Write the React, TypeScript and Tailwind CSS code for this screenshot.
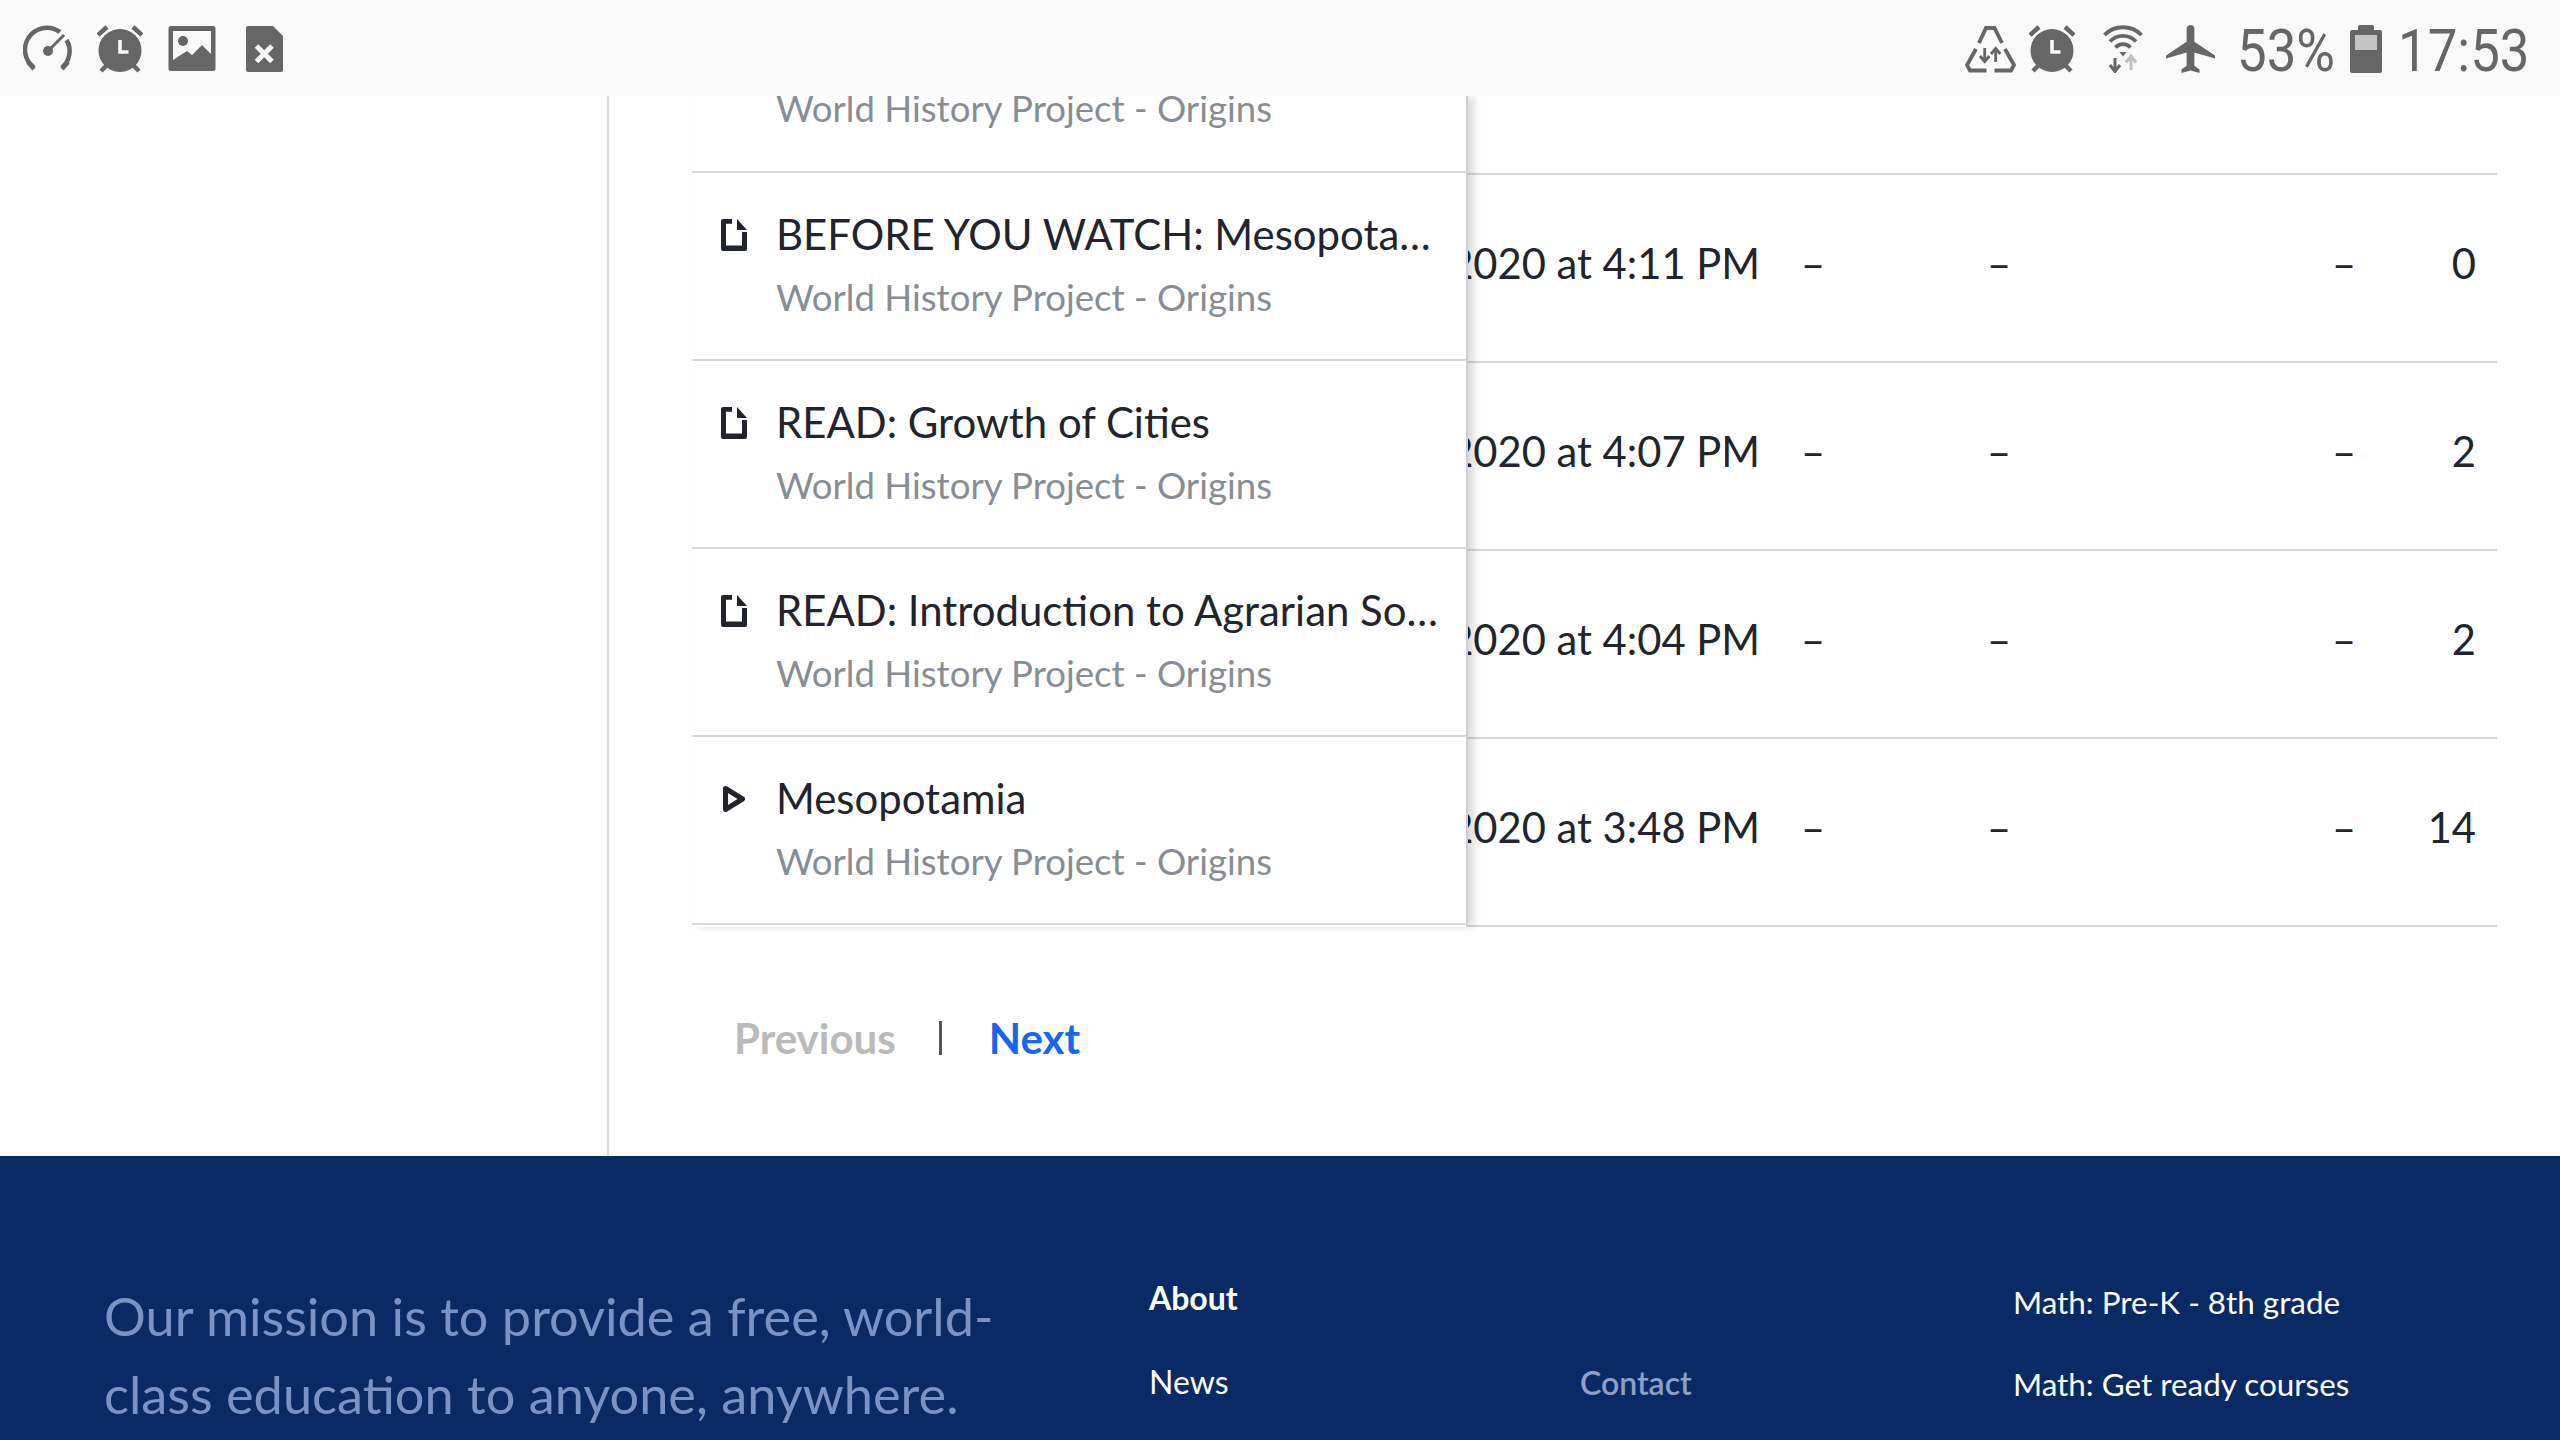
// App.tsx
const rows = [
  { title: "BEFORE YOU WATCH: Mesopotamia", kind: "article", time: "2020 at 4:11 PM", count: "0" },
  { title: "READ: Growth of Cities", kind: "article", time: "2020 at 4:07 PM", count: "2" },
  { title: "READ: Introduction to Agrarian Societies", kind: "article", time: "2020 at 4:04 PM", count: "2" },
  { title: "Mesopotamia", kind: "video", time: "2020 at 3:48 PM", count: "14" },
];

function AlarmIcon({ cx, width }: { cx: number; width: number }) {
  return (
    <svg width={width} height={48} viewBox={`${cx - width / 2} 25 ${width} 48`}>
      <circle cx={cx} cy={50.5} r={21.5} fill="#666" />
      <path d={`M${cx - 22} 35l9-8M${cx + 22} 35l-9-8M${cx - 19} 71l5-5M${cx + 19} 71l-5-5`} stroke="#666" strokeWidth={4.5} fill="none" />
      <path d={`M${cx} 40v12h8.5`} stroke="#f9f9f9" strokeWidth={3.6} fill="none" />
    </svg>
  );
}

function GaugeIcon() {
  return (
    <svg width={50} height={48} viewBox="23 25 50 48" fill="none" stroke="#666" strokeWidth={4.5}>
      <path d="M34 67.500A21.500 21.500 0 0 1 60 32" />
      <path d="M66.500 40A21.500 21.500 0 0 1 62 67.500" />
      <path d="M28 62l6 7M68 62l-6 7" />
      <path d="M48 51L64 35" strokeWidth={3} />
      <circle cx={48} cy={51} r={5} fill="#666" stroke="none" />
    </svg>
  );
}

function ImageIcon() {
  return (
    <svg width={48} height={48} viewBox="168 25 48 48">
      <rect x={168.500} y={26} width={47} height={45} rx={2.500} fill="#666" />
      <rect x={173} y={31} width={38} height={30} fill="#f9f9f9" />
      <circle cx={183} cy={41} r={5} fill="#666" />
      <path d="M173 60l14-9 5 4 10-10 9 9v17h-38z" fill="#666" />
    </svg>
  );
}

function SimErrorIcon() {
  return (
    <svg width={37} height={48} viewBox="246 25 37 48">
      <path d="M248 26h25l10 10v34a2 2 0 0 1-2 2h-33a2 2 0 0 1-2-2V28a2 2 0 0 1 2-2z" fill="#666" />
      <path d="M256.500 46l15.500 15.500M272 46l-15.500 15.500" stroke="#f9f9f9" strokeWidth={5} />
    </svg>
  );
}

function DataRecycleIcon() {
  return (
    <svg width={51} height={48} viewBox="1965 25 51 48" fill="none" stroke="#666" strokeWidth={3.800}>
      <path d="M1979 43l7-15h8.500l7.500 15" />
      <path d="M1976 49l-9 16 3 5.500h16.500" />
      <path d="M2005 49l9 16-3 5.500h-16.500" />
      <path d="M1984.700 48v13M1980 56l4.700 5.500 4.700-5.500" strokeWidth={2.800} />
      <path d="M1995.700 62V49M1991 54l4.700-5.500 4.700 5.500" strokeWidth={2.800} />
    </svg>
  );
}

function WifiIcon() {
  return (
    <svg width={40} height={48} viewBox="2103 25 40 48" fill="none" stroke="#666" strokeWidth={3.800}>
      <path d="M2104.500 35a26 26 0 0 1 37 0" />
      <path d="M2110 41.500a18 18 0 0 1 26 0" />
      <path d="M2115.500 47.500a10 10 0 0 1 15 0" />
      <path d="M2119.500 52h7l-3.500 4.500z" fill="#666" stroke="none" />
      <path d="M2115 58v12M2110 65l5 6.500 5-6.500" strokeWidth={3} />
      <path d="M2131 70V57M2126 62.500l5-6.500 5 6.500" strokeWidth={3} stroke="#c2c2c2" />
    </svg>
  );
}

function PlaneIcon() {
  return (
    <svg width={49} height={48} viewBox="2 2 19 20" preserveAspectRatio="none">
      <path d="M21 16v-1.300l-8-5.700V3.500c0-.83-.67-1.500-1.500-1.500S10 2.670 10 3.500V9l-8 5.700V16l8-2.500V19l-2 1.500V22l3.500-1 3.500 1v-1.500L13 19v-5.500z" fill="#666" />
    </svg>
  );
}

function BatteryIcon() {
  return (
    <svg width={32} height={48} viewBox="2350 25 32 48">
      <path d="M2358 27a2 2 0 0 1 2-2h12a2 2 0 0 1 2 2v3h6a2 2 0 0 1 2 2v39a2 2 0 0 1-2 2h-28a2 2 0 0 1-2-2V32a2 2 0 0 1 2-2h6z" fill="#666" />
      <rect x={2355} y={35} width={22} height={15} fill="#c4c4c4" />
    </svg>
  );
}

function ArticleIcon() {
  return (
    <svg width={26} height={32} viewBox="0 0 26 32" fill="#21242c">
      <path d="M2 0h9v4.800H5V26.500h16V13h5v17a2 2 0 0 1-2 2H2a2 2 0 0 1-2-2V2a2 2 0 0 1 2-2z" />
      <path d="M16 0l10 11H16z" />
    </svg>
  );
}

function VideoIcon() {
  return (
    <svg width={22} height={26} viewBox="0 0 22 26" fill="none" stroke="#21242c" strokeWidth={5} strokeLinejoin="round">
      <path d="M2.500 2.500L19.500 13 2.500 23.500z" />
    </svg>
  );
}

function StatusBar() {
  return (
    <div className="relative z-20 flex h-[96px] shrink-0 items-start justify-between bg-[#f9f9f9] pt-[25px] pl-[23px] pr-[31px]">
      <div className="flex">
        <GaugeIcon />
        <div className="ml-[24px]"><AlarmIcon cx={120} width={46} /></div>
        <div className="ml-[25px]"><ImageIcon /></div>
        <div className="ml-[30px]"><SimErrorIcon /></div>
      </div>
      <div className="flex">
        <DataRecycleIcon />
        <div className="ml-[13px]"><AlarmIcon cx={2052} width={46} /></div>
        <div className="ml-[28px]"><WifiIcon /></div>
        <div className="ml-[23px]"><PlaneIcon /></div>
        <div className="ml-[22px] w-[94px] origin-left scale-x-[0.88] font-['Roboto',sans-serif] text-[60px] leading-[52px] text-[#666]">53%</div>
        <div className="ml-[19px]"><BatteryIcon /></div>
        <div className="ml-[16px] w-[131px] origin-left scale-x-[0.88] font-['Roboto',sans-serif] text-[60px] leading-[52px] whitespace-nowrap text-[#666]">17:53</div>
      </div>
    </div>
  );
}

function StickyColumn() {
  return (
    <div className="relative z-10 w-[776px] shrink-0 border-r-2 border-[#cfcfcf] bg-white shadow-[6px_0_8px_rgba(0,0,0,0.14)]">
      <div className="flex h-[77px] items-end border-b-2 border-[#d6d8da] pb-[32px] pl-[84px]">
        <span className="text-[36.600px] leading-[62px] text-[#888d93]">World History Project - Origins</span>
      </div>
      {rows.map((row) => (
        <div key={row.title} className="flex h-[188px] border-b-2 border-[#d6d8da] pt-[30px] pl-[29px]">
          <div className="flex h-[63px] w-[26px] shrink-0 items-center justify-center">
            {row.kind === "article" ? <ArticleIcon /> : <VideoIcon />}
          </div>
          <div className="ml-[29px] w-[670px] min-w-0">
            <div className="truncate text-[41.900px] leading-[63px] text-[#21242c]">{row.title}</div>
            <div className="text-[36.600px] leading-[62px] text-[#888d93]">World History Project - Origins</div>
          </div>
        </div>
      ))}
    </div>
  );
}

function ScrollColumn() {
  return (
    <div className="min-w-0 flex-1 overflow-hidden">
      <div className="h-[79px] border-b-2 border-[#d6d8da]" />
      {rows.map((row) => (
        <div key={row.title} className="flex h-[188px] items-center border-b-2 border-[#d6d8da] pb-[9px] text-[41.700px] text-[#21242c]">
          <div className="flex w-[292px] shrink-0 justify-end whitespace-nowrap">{row.time}</div>
          <div className="ml-[41px] w-[186px] shrink-0">–</div>
          <div className="w-[345px] shrink-0">–</div>
          <div className="w-[60px] shrink-0">–</div>
          <div className="flex-1 pr-[21px] text-right">{row.count}</div>
        </div>
      ))}
    </div>
  );
}

function Footer() {
  return (
    <footer className="flex flex-1 bg-[#0a2a66] pl-[104px]">
      <p className="w-[1045px] shrink-0 pt-[121px] pr-[80px] text-[52.300px] leading-[78px] text-[#7b93c4]">
        Our mission is to provide a free, world-class education to anyone, anywhere.
      </p>
      <div className="w-[431px] shrink-0 pt-[117px] text-[32px] leading-[50px] text-white">
        <div className="font-bold">About</div>
        <div className="mt-[34px]">News</div>
      </div>
      <div className="w-[433px] shrink-0 pt-[202px] text-[32px] leading-[50px] font-semibold text-[#8c9fc8]">Contact</div>
      <div className="pt-[121px] text-[31.400px] leading-[50px] text-white">
        <div>Math: Pre-K - 8th grade</div>
        <div className="mt-[32px]">Math: Get ready courses</div>
      </div>
    </footer>
  );
}

export default function App() {
  return (
    <div className="flex h-[1440px] w-[2560px] flex-col overflow-hidden bg-white font-['Lato',sans-serif]">
      <StatusBar />
      <main className="flex h-[1060px] shrink-0">
        <div className="w-[609px] shrink-0 border-r-2 border-[#dcdcdc]" />
        <div className="min-w-0 flex-1 pl-[83px] pr-[63px]">
          <div className="flex">
            <StickyColumn />
            <ScrollColumn />
          </div>
          <div className="mt-[81px] flex h-[60px] items-center pl-[42px] text-[42px] font-bold">
            <span className="text-[#bababa]">Previous</span>
            <span className="ml-[43px] h-[34px] w-[3px] bg-[#555]" />
            <span className="ml-[47px] text-[#1865f2]">Next</span>
          </div>
        </div>
      </main>
      <Footer />
    </div>
  );
}
